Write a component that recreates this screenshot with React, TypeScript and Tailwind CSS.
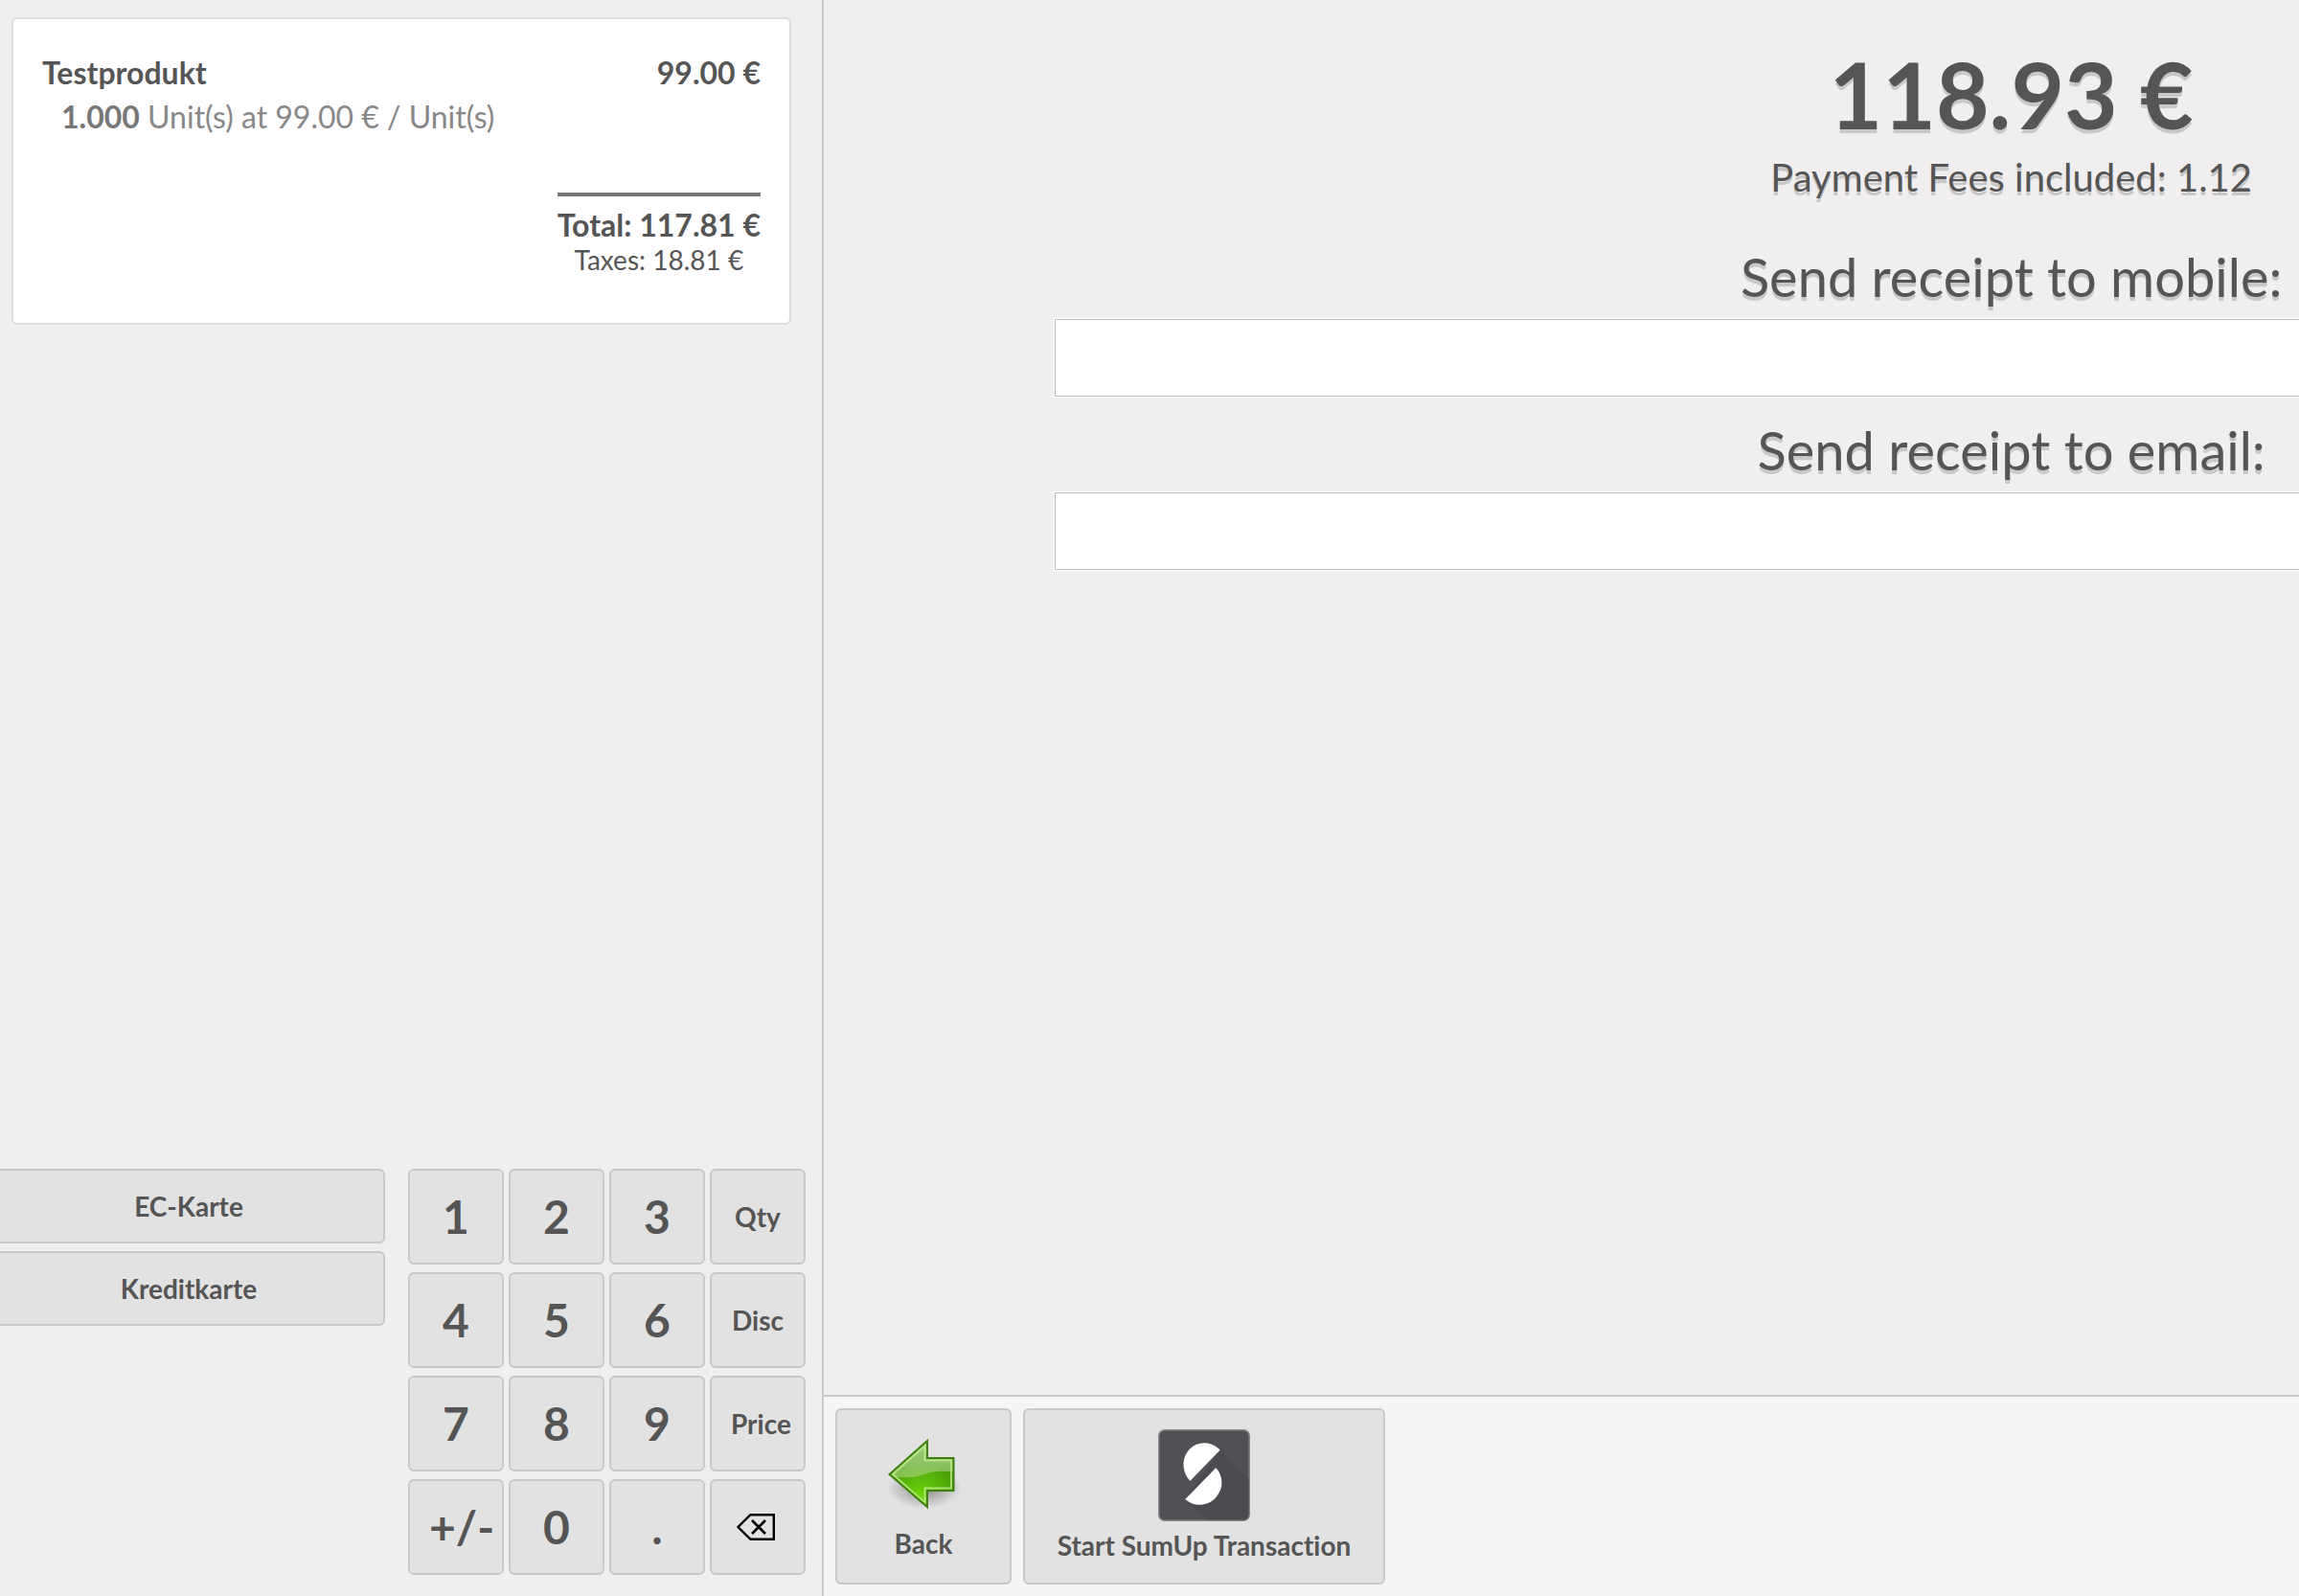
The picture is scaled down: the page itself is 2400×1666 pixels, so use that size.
import React, { useState } from "react";

const buttonLook =
  "border-2 border-[#c9c9c9] bg-[#e2e2e2] rounded-md font-bold cursor-pointer";

function BackspaceIcon() {
  return (
    <svg viewBox="0 0 40 28" className="ml-1.5 h-7 w-10" fill="none" stroke="#000" aria-hidden="true">
      <path d="M14.5 1.2H38.8V26.8H14.5L1.5 14Z" strokeWidth="2.4" />
      <path d="M16 7L30 21M30 7L16 21" strokeWidth="2.6" />
    </svg>
  );
}

function BackArrowIcon() {
  return (
    <svg viewBox="0 0 96 96" className="size-24" aria-hidden="true">
      <defs>
        <radialGradient id="arrowShadow">
          <stop offset="0" stopColor="#000" stopOpacity="0.42" />
          <stop offset="0.6" stopColor="#000" stopOpacity="0.16" />
          <stop offset="1" stopColor="#000" stopOpacity="0" />
        </radialGradient>
        <radialGradient id="arrowFill" cx="0.48" cy="0.86" r="0.55">
          <stop offset="0" stopColor="#6fd80c" />
          <stop offset="1" stopColor="#4b9f08" />
        </radialGradient>
        <linearGradient id="arrowGloss" x1="0" y1="0" x2="0" y2="1">
          <stop offset="0" stopColor="#fff" stopOpacity="0.5" />
          <stop offset="1" stopColor="#fff" stopOpacity="0.28" />
        </linearGradient>
        <clipPath id="arrowClip">
          <path d="M13 49L52 14.5V32H80V66.5H52V83Z" />
        </clipPath>
      </defs>
      <ellipse cx="49" cy="63" rx="39" ry="22" fill="url(#arrowShadow)" />
      <path d="M12.5 49L52 14V32H79.5V66H52V83Z" fill="url(#arrowFill)" />
      <path
        d="M9 49V9H85V47C71 45 59 45 49 49C39 53 27 53 15 51Z"
        fill="url(#arrowGloss)"
        clipPath="url(#arrowClip)"
      />
      <path d="M16 49L49.5 19V34.5H77V63.5H49.5V78.5Z" fill="none" stroke="#c4f090" strokeOpacity="0.75" strokeWidth="2" />
      <path d="M12.5 49L52 14V32H79.5V66H52V83Z" fill="none" stroke="#3f7f0f" strokeWidth="2" />
    </svg>
  );
}

function SumUpIcon() {
  return (
    <svg viewBox="0 0 96 96" className="size-24" aria-hidden="true">
      <rect x="0.75" y="0.75" width="94.5" height="94.5" rx="6" fill="#505155" stroke="#85868a" strokeWidth="1.5" />
      <path d="M64.5 22L94.5 52V89Q94.5 94.5 89 94.5H52L28 74Z" fill="#4a4b4e" />
      <path d="M64.7 21.6C56 12.5 42 11.6 33 20.5C24.5 29 24 44 33.5 53.8Z" fill="#fff" />
      <path d="M60.3 40.2C68.5 49 68.5 62.5 60 71.5C51.5 80.5 37.5 81.5 28.3 73Z" fill="#fff" />
    </svg>
  );
}

function OrderCard() {
  return (
    <section className="mt-[18px] mr-8 ml-3 rounded-md border-2 border-[#dcdcdc] bg-white px-[30px] pt-[33px] pb-[52px]">
      <div className="flex justify-between text-[32px] leading-[46px] font-bold">
        <span>Testprodukt</span>
        <span>99.00 €</span>
      </div>
      <p className="pl-5 text-[32px] leading-[46px] text-[#888]">
        <strong className="text-[#777]">1.000</strong> Unit(s) at 99.00 € / Unit(s)
      </p>
      <div className="mt-14 flex justify-end">
        <div className="border-t-4 border-[#777] pt-2 text-center">
          <p className="text-[32px] leading-[44px] font-bold">Total: 117.81 €</p>
          <p className="text-[28px] leading-7">Taxes: 18.81 €</p>
        </div>
      </div>
    </section>
  );
}

const keys = ["1", "2", "3", "Qty", "4", "5", "6", "Disc", "7", "8", "9", "Price", "+/-", "0", ".", "Backspace"];
const modes = ["Qty", "Disc", "Price"];

function Keypad() {
  return (
    <div className="grid grid-cols-[repeat(4,100px)] gap-x-[5px] gap-y-2">
      {keys.map((key) => (
        <button
          key={key}
          type="button"
          aria-label={key}
          className={`${buttonLook} size-[100px] px-5 text-center whitespace-nowrap ${
            modes.includes(key) ? "text-[28px]" : "text-5xl"
          }`}
        >
          {key === "Backspace" ? <BackspaceIcon /> : key}
        </button>
      ))}
    </div>
  );
}

function ReceiptField({ id, label, type }: { id: string; label: string; type: string }) {
  const [value, setValue] = useState("");
  return (
    <div className="mb-6 w-full">
      <label htmlFor={id} className="block pb-3 text-center text-[56px] leading-[64px] [text-shadow:0_4px_#c9c8c8]">
        {label}
      </label>
      <input
        id={id}
        type={type}
        value={value}
        onChange={(e) => setValue(e.target.value)}
        className="block h-[81px] w-full border border-[#bbb] bg-white px-4 text-[40px] shadow-[0_0_0_1px_#fff] outline-none"
      />
    </div>
  );
}

export default function App() {
  return (
    <div className="flex h-screen overflow-hidden bg-[#f0eeee] font-['Lato',sans-serif] text-[#555] [font-variant-ligatures:none]">
      <aside className="flex w-[860px] shrink-0 flex-col justify-between border-r-2 border-[#c9c9c9]">
        <OrderCard />
        <div className="flex justify-between pr-[17px] pb-[22px]">
          <div className="-ml-2 flex w-[410px] flex-col gap-2">
            {["EC-Karte", "Kreditkarte"].map((name) => (
              <button key={name} type="button" className={`${buttonLook} h-[78px] text-[28px]`}>
                {name}
              </button>
            ))}
          </div>
          <Keypad />
        </div>
      </aside>
      <div className="flex min-w-0 flex-1 flex-col">
        <main className="flex-1 overflow-hidden">
          <div className="flex w-[161%] flex-col items-center px-[241px] pt-10">
            <h1 className="text-[96px] leading-[116px] font-bold [text-shadow:0_4px_#c9c8c8]">118.93 €</h1>
            <p className="mt-0.5 mb-[45px] text-[40px] leading-[54px] [text-shadow:0_4px_#c9c8c8]">
              Payment Fees included: 1.12
            </p>
            <ReceiptField id="mobile" type="tel" label="Send receipt to mobile:" />
            <ReceiptField id="email" type="email" label="Send receipt to email:" />
          </div>
        </main>
        <footer className="flex gap-3 border-t-2 border-[#c9c9c9] bg-[#f5f5f5] p-3">
          <button
            type="button"
            className={`${buttonLook} flex h-[184px] w-[184px] flex-col items-center pt-[18px] text-[28px] leading-[50px]`}
          >
            <BackArrowIcon />
            Back
          </button>
          <button
            type="button"
            className={`${buttonLook} flex h-[184px] min-w-[378px] flex-col items-center px-[31px] pt-5 text-[28px] leading-[50px]`}
          >
            <SumUpIcon />
            Start SumUp Transaction
          </button>
        </footer>
      </div>
    </div>
  );
}
